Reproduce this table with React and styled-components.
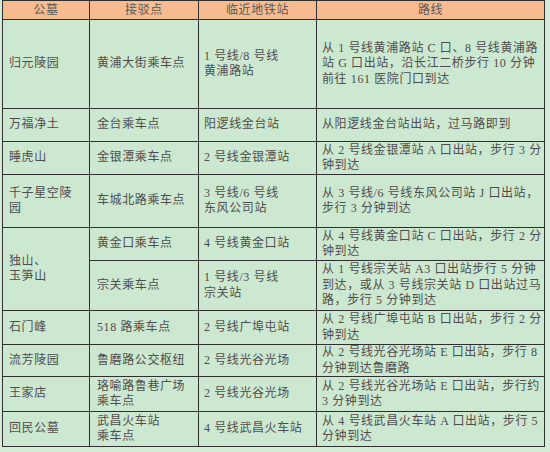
import React from 'react';
import styled, { createGlobalStyle } from 'styled-components';

const GlobalStyle = createGlobalStyle`
  html, body {
    margin: 0;
    padding: 0;
    background: #d4ecd6;
  }
  body {
    width: 550px;
    height: 452px;
    overflow: hidden;
  }
`;

const Page = styled.div`
  padding: 0 0 0 2px;
`;

const Table = styled.table`
  border-collapse: collapse;
  table-layout: fixed;
  width: 542px;
  font-family: "Liberation Serif", "Noto Sans CJK SC", serif;
  font-size: 12px;
  letter-spacing: 0.6px;
  line-height: 15.5px;
  color: #4d4d4d;
`;

const Col = styled.col`
  width: ${(p) => p.$w}px;
`;

const HeadCell = styled.th`
  background: #f6bb8f;
  border: 1px solid #2f2f2f;
  font-weight: normal;
  text-align: center;
  height: ${(p) => p.$h}px;
  padding: 0;
  line-height: 15px;
  color: #5a5a5a;
`;

const Row = styled.tr`
  height: ${(p) => p.$h}px;
`;

const Cell = styled.td`
  background: #cde8d0;
  border: 1px solid #2f2f2f;
  vertical-align: middle;
  padding: 0 0 0 ${(p) => p.$pl || 6}px;
  white-space: nowrap;
  overflow: hidden;
`;

const Lines = ({ text }) =>
  text.split('\n').map((line, i, arr) => (
    <React.Fragment key={i}>
      {line}
      {i < arr.length - 1 && <br />}
    </React.Fragment>
  ));

const rows = [
  {
    h: 89,
    name: '归元陵园',
    point: '黄浦大街乘车点',
    station: '1 号线/8 号线\n黄浦路站',
    route: '从 1 号线黄浦路站 C 口、8 号线黄浦路\n站 G 口出站，沿长江二桥步行 10 分钟\n前往 161 医院门口到达',
  },
  { h: 33, name: '万福净土', point: '金台乘车点', station: '阳逻线金台站', route: '从阳逻线金台站出站，过马路即到' },
  {
    h: 33,
    name: '睡虎山',
    point: '金银潭乘车点',
    station: '2 号线金银潭站',
    route: '从 2 号线金银潭站 A 口出站，步行 3 分\n钟到达',
  },
  {
    h: 53,
    name: '千子星空陵\n园',
    point: '车城北路乘车点',
    station: '3 号线/6 号线\n东风公司站',
    route: '从 3 号线/6 号线东风公司站 J 口出站，\n步行 3 分钟到达',
  },
  {
    h: 33,
    name: '独山、\n玉笋山',
    span: 2,
    point: '黄金口乘车点',
    station: '4 号线黄金口站',
    route: '从 4 号线黄金口站 C 口出站，步行 2 分\n钟到达',
  },
  {
    h: 50,
    point: '宗关乘车点',
    station: '1 号线/3 号线\n宗关站',
    route: '从 1 号线宗关站 A3 口出站步行 5 分钟\n到达，或从 3 号线宗关站 D 口出站过马\n路，步行 5 分钟到达',
  },
  {
    h: 34,
    name: '石门峰',
    point: '518 路乘车点',
    station: '2 号线广埠屯站',
    route: '从 2 号线广埠屯站 B 口出站，步行 2 分\n钟到达',
  },
  {
    h: 32,
    name: '流芳陵园',
    point: '鲁磨路公交枢纽',
    station: '2 号线光谷光场',
    route: '从 2 号线光谷光场站 E 口出站，步行 8\n分钟到达鲁磨路',
  },
  {
    h: 35,
    name: '王家店',
    point: '珞喻路鲁巷广场\n乘车点',
    station: '2 号线光谷光场',
    route: '从 2 号线光谷光场站 E 口出站，步行约\n3 分钟到达',
  },
  {
    h: 35,
    name: '回民公墓',
    point: '武昌火车站\n乘车点',
    station: '4 号线武昌火车站',
    route: '从 4 号线武昌火车站 A 口出站，步行 5\n分钟到达',
  },
];

export default function App() {
  return (
    <Page>
      <GlobalStyle />
      <Table>
        <colgroup>
          <Col $w={87} />
          <Col $w={109} />
          <Col $w={118} />
          <Col $w={228} />
        </colgroup>
        <thead>
          <tr>
            <HeadCell $h={18}>公墓</HeadCell>
            <HeadCell $h={18}>接驳点</HeadCell>
            <HeadCell $h={18}>临近地铁站</HeadCell>
            <HeadCell $h={18}>路线</HeadCell>
          </tr>
        </thead>
        <tbody>
          {rows.map((r, i) => (
            <Row key={i} $h={r.h}>
              {r.name && (
                <Cell rowSpan={r.span || 1} $pl={6}>
                  <Lines text={r.name} />
                </Cell>
              )}
              <Cell $pl={7}>
                <Lines text={r.point} />
              </Cell>
              <Cell $pl={5}>
                <Lines text={r.station} />
              </Cell>
              <Cell $pl={5}>
                <Lines text={r.route} />
              </Cell>
            </Row>
          ))}
        </tbody>
      </Table>
    </Page>
  );
}
